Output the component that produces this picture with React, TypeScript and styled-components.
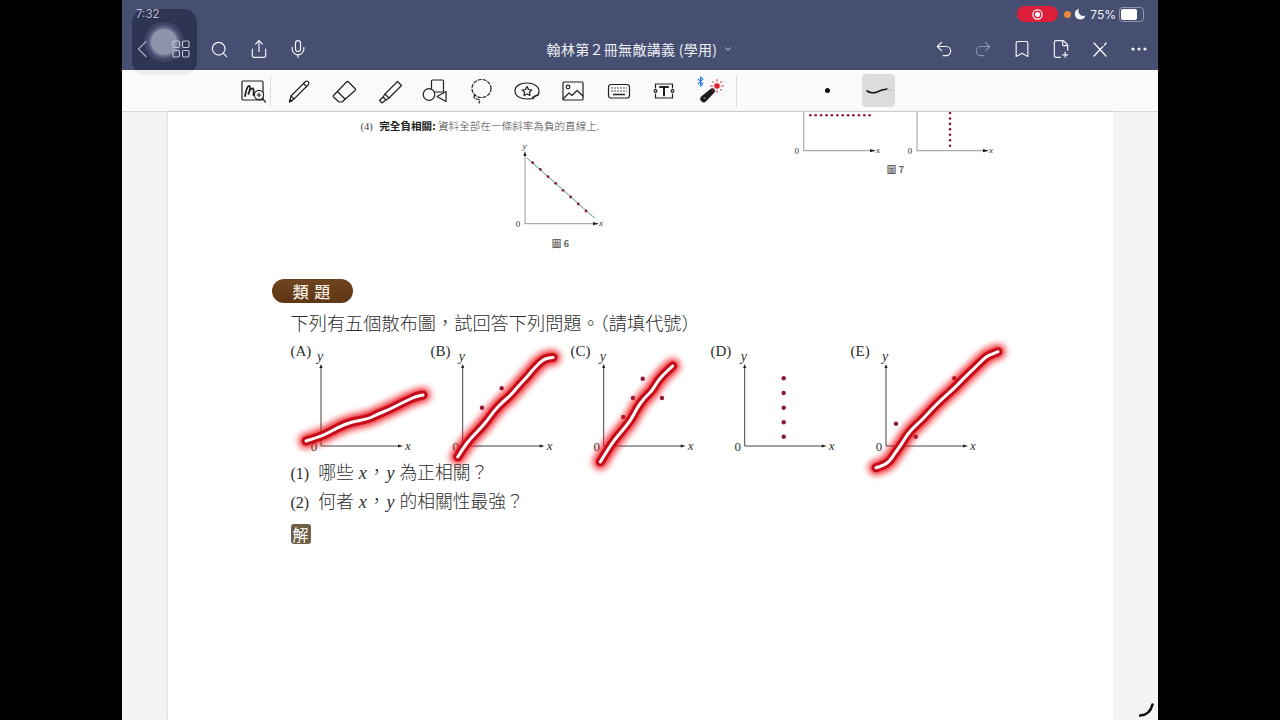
import styled, { createGlobalStyle } from 'styled-components'
import { Search, Share, Mic, Undo2, Redo2, Bookmark, FilePlus2, ChevronDown, Bluetooth } from 'lucide-react'

const serif = `'Liberation Serif', 'Noto Sans CJK TC', serif`
const sans = `'Noto Sans CJK TC', 'Noto Sans', sans-serif`

const GlobalStyle = createGlobalStyle`
  html, body { margin: 0; padding: 0; background: #000; }
  #root { width: 1280px; height: 720px; }
`

type Pt = number[]

// all chart points are in page coordinates, so they can be read straight off the scan
const charts: { label: string; x0: number; axis: number; dots: Pt[]; stroke?: Pt[] }[] = [
  {
    label: '(A)', x0: 290, axis: 320, dots: [],
    stroke: [[305, 441], [318, 437], [327, 433], [338, 427], [350, 422], [367, 419], [377, 414], [387, 410], [397, 405], [407, 400], [415, 396.5], [422, 395]],
  },
  {
    label: '(B)', x0: 430, axis: 461.7, dots: [[481, 407.7], [500.7, 388.3]],
    stroke: [[456.7, 457], [463, 447], [470, 438], [479, 429], [486.7, 420], [493, 411], [501.7, 402], [510, 395], [518.3, 385], [526, 377], [533.3, 368], [541.7, 360], [547, 358], [552, 357.5]],
  },
  {
    label: '(C)', x0: 570, axis: 602.7, dots: [[622.3, 417], [632, 398], [641.7, 378.7], [661, 398], [612.7, 436.7]],
    stroke: [[599.3, 462], [606, 451], [613.3, 440], [621, 431], [630, 420], [636, 408], [643.3, 398], [651, 391], [656.7, 381], [664, 373], [671.7, 366]],
  },
  {
    label: '(D)', x0: 710, axis: 743.7, dots: [[782.7, 378.3], [782.7, 393], [782.7, 407.7], [782.7, 422.3], [782.7, 436.7]],
  },
  {
    label: '(E)', x0: 850, axis: 885, dots: [[895, 423.7], [914.7, 436.7], [953.3, 378.3]],
    stroke: [[875, 467.7], [882, 465.5], [888.3, 461.7], [894, 453], [900, 445], [906, 435], [913.3, 426.7], [921, 420], [930, 410], [941, 399], [953.3, 388.3], [963, 378], [973.3, 368.3], [985, 356.7], [991, 354], [997, 351.7]],
  },
]

const comma = '\uFF0C'
const ask = '\uFF1F'

const toPath = (pts: Pt[]) => {
  let d = `M${pts[0][0]} ${pts[0][1]}`
  for (let i = 1; i < pts.length - 1; i++) {
    const mx = (pts[i][0] + pts[i + 1][0]) / 2
    const my = (pts[i][1] + pts[i + 1][1]) / 2
    d += ` Q${pts[i][0]} ${pts[i][1]} ${mx} ${my}`
  }
  const last = pts[pts.length - 1]
  return d + ` L${last[0]} ${last[1]}`
}

function Axes({ x, base, top, end, size = 13, small = false }: { x: number; base: number; top: number; end: number; size?: number; small?: boolean }) {
  const colour = small ? '#aaa' : '#444'
  const a = small ? 4 : 3
  return (
    <g>
      <path d={`M${x} ${top} V${base} H${end}`} fill="none" stroke={colour} strokeWidth={small ? 1.2 : 1} />
      {top > 120 && <path d={`M${x} ${top - a} l-1.6 ${a + 1} h3.2 z`} fill="#222" />}
      <path d={`M${end + a} ${base} l-${a + 2} -1.6 v3.2 z`} fill="#222" />
      <ChartText x={x - 7} y={base + size * 0.38} $size={size} textAnchor="middle">0</ChartText>
      <ChartText x={end + (small ? 4 : 5)} y={base + size * 0.3} $size={size} $italic>x</ChartText>
    </g>
  )
}

function ScatterChart({ x0, axis, dots, stroke }: { x0: number; axis: number; dots: Pt[]; stroke?: Pt[] }) {
  return (
    <ChartSvg viewBox={`${x0} 356 140 101`}>
      <Axes x={axis} base={446} top={367} end={axis + 79} />
      <ChartText x={axis - 4} y={361} $size={14} $italic>y</ChartText>
      {dots.map((d, i) => <circle key={i} cx={d[0]} cy={d[1]} r={2.2} fill="#8a1a3a" />)}
      {stroke && (
        <g fill="none" strokeLinecap="round" strokeLinejoin="round">
          <path d={toPath(stroke)} stroke="#f0141e" strokeWidth={15} opacity={0.9} filter="url(#glow)" />
          <path d={toPath(stroke)} stroke="#c40c1a" strokeWidth={9} />
          <path d={toPath(stroke)} stroke="#fff" strokeWidth={3} />
        </g>
      )}
    </ChartSvg>
  )
}

function Figure6() {
  const dots = [575, 598, 621, 644, 666, 689, 712, 735].map((zx, i) => [340 + zx / 3, 112 + [152, 172, 194, 214, 235, 255, 276, 297][i] / 3])
  return (
    <FigureSvg viewBox="510 138 100 94" $w={100} $h={94}>
      <Axes x={524} base={223.7} top={155} end={594} size={9} small />
      <ChartText x={521.5} y={149} $size={9} $italic>y</ChartText>
      <path d="M526 158 L593.5 218" stroke="#4f9a86" strokeWidth={1} />
      {dots.map((d, i) => <circle key={i} cx={d[0]} cy={d[1]} r={1.4} fill="#8a1a3a" />)}
    </FigureSvg>
  )
}

function Figure7() {
  const across = Array.from({ length: 12 }, (_, i) => 809.3 + i * 5.4)
  const down = Array.from({ length: 7 }, (_, i) => 114 + i * 5.45)
  return (
    <FigureSvg viewBox="790 113 210 47" $w={210} $h={47}>
      <Axes x={802.7} base={151.7} top={100} end={871} size={9} small />
      <Axes x={916} base={151.7} top={100} end={984} size={9} small />
      {across.map((x) => <circle key={x} cx={x} cy={116.3} r={1.3} fill="#8a1a3a" />)}
      {down.map((y) => <circle key={y} cx={949} cy={y} r={1.3} fill="#8a1a3a" />)}
    </FigureSvg>
  )
}

/* toolbar drawings */
const Ink = ({ children, w = 28 }: { children: React.ReactNode; w?: number }) => (
  <svg width={w} height={28} viewBox="0 0 28 28" fill="none" stroke="#222" strokeWidth={1.2} strokeLinecap="round" strokeLinejoin="round">
    {children}
  </svg>
)

const tools = [
  <Ink key="pen">
    <path d="M5.5 25 L7 19 L21.5 4.5 Q23 3.5 24.2 4.7 Q25.5 6 24.5 7.5 L10 22 Z" />
    <path d="M7 19 L10 22 M19.5 6.5 L22.5 9.5" />
    <path d="M5.5 25 L6.2 22.5 L8 24 Z" fill="#222" />
  </Ink>,
  <Ink key="eraser">
    <path d="M3.5 18.5 L16.5 5 Q17.5 4 18.5 5 L25 11.5 Q26 12.5 25 13.5 L12 25 H9 L3.5 20 Q3 19 3.5 18.5 Z" />
    <path d="M7.5 14.5 L15 22" />
  </Ink>,
  <Ink key="marker">
    <path d="M9 17 L21.5 4.5 L25.5 8.5 L13 21 Z" />
    <path d="M9 17 L7 20 L10 23 L13 21 M7 20 L3.5 23.5 L6 26 L10 23" />
  </Ink>,
  <Ink key="shapes">
    <rect x="10.5" y="3" width="12" height="12" rx="1" />
    <circle cx="8" cy="17.5" r="5.8" fill="#fafafa" />
    <path d="M25 14.5 V24.5 L16 19.5 Z" fill="#fafafa" />
  </Ink>,
  <Ink key="lasso">
    <ellipse cx="14.5" cy="11.5" rx="9.5" ry="9" strokeDasharray="3 2" />
    <path d="M7.5 18 Q6 22 10 22 Q14 22.5 12 26" strokeDasharray="3 2" />
  </Ink>,
  <Ink key="sticker">
    <path d="M14 6 C7 6 2 9 2 14 C2 19.5 8 22 14 22 Q17 22 19 21.5 Q20 19 23 18.5 Q26 18 26 15 C26.5 9 20 6 14 6 Z" />
    <path d="M20 22 Q21 19.5 25.5 18" />
    <path d="M14 9.5 L15.5 12.5 L18.8 13 L16.4 15.2 L17 18.5 L14 17 L11 18.5 L11.6 15.2 L9.2 13 L12.5 12.5 Z" />
  </Ink>,
  <Ink key="image">
    <rect x="4" y="5" width="20" height="18" rx="1" />
    <circle cx="9" cy="10" r="1.8" />
    <path d="M4 22 L10 16 L13 18.5 L18 13.5 L24 19" />
  </Ink>,
  <Ink key="keyboard">
    <rect x="3.5" y="7.5" width="21" height="13.5" rx="2.5" />
    <path d="M6.5 11h1M9.5 11h1M12.5 11h1M15.5 11h1M18.5 11h1M21 11h.5M6.5 14h1M9.5 14h1M12.5 14h1M15.5 14h1M18.5 14h1M21 14h.5M8 17.5h12" strokeWidth={1.6} strokeLinecap="butt" />
  </Ink>,
  <Ink key="text">
    <path d="M5.5 11 V7 H22.5 V11 M5.5 17 V21 H22.5 V17" />
    <circle cx="5.5" cy="14" r="1.4" />
    <circle cx="22.5" cy="14" r="1.4" />
    <path d="M10 10 H18 M14 10 V18.5" strokeWidth={2} />
  </Ink>,
  <Ink key="laser">
    <path d="M6.5 24.5 Q3.5 22.5 5.5 20 L15.5 12 Q17 11.5 18 12.5 Q19 14 18 15 L9.5 24 Q8 25.5 6.5 24.5 Z" fill="#1c1c1c" />
    <circle cx="8.5" cy="21" r="1" fill="#777" stroke="none" />
    <circle cx="21" cy="9" r="2.8" fill="#e0222e" stroke="none" />
    <path d="M21 2.5v2M21 13.5v2M14.5 9h2M25.5 9h2M16.5 4.5l1.4 1.4M24.2 12.2l1.4 1.4M16.5 13.5l1.4-1.4M24.2 5.8l1.4-1.4" stroke="#e0222e" strokeWidth={0.9} />
  </Ink>,
]

export default function App() {
  return (
    <>
      <GlobalStyle />
      <Stage>
        <Tablet>
          <Header>
            <FloatingTouch>
              <TouchRing />
            </FloatingTouch>
            <StatusBar>
              <Clock>7:32</Clock>
              <StatusRight>
                <RecordPill>
                  <RecordDot />
                </RecordPill>
                <OrangeDot />
                <svg width="12" height="12" viewBox="0 0 12 12"><path d="M5 .8 A5.4 5.4 0 1 0 11.4 7.6 A5 5 0 0 1 5 .8 Z" fill="#f2f2f6" /></svg>
                <Percent>75%</Percent>
                <Battery>
                  <BatteryFill />
                </Battery>
              </StatusRight>
            </StatusBar>
            <NavBar>
              <NavGroup>
                <NavSlot>
                  <svg width="12" height="18" viewBox="0 0 12 18" fill="none" stroke="#a3a7bb" strokeWidth="1.3" strokeLinecap="round" strokeLinejoin="round"><path d="M10 1.5 L2.5 9 L10 16.5" /></svg>
                </NavSlot>
                <NavSlot>
                  <svg width="18" height="18" viewBox="0 0 18 18" fill="none" stroke="#c6c8d6" strokeWidth="1.1"><rect x="1" y="1" width="6.5" height="6.5" rx="1.2" /><rect x="10.5" y="1" width="6.5" height="6.5" rx="1.2" /><rect x="1" y="10.5" width="6.5" height="6.5" rx="1.2" /><rect x="10.5" y="10.5" width="6.5" height="6.5" rx="1.2" /></svg>
                </NavSlot>
                <NavSlot><Search size={19} strokeWidth={1.5} /></NavSlot>
                <NavSlot><Share size={20} strokeWidth={1.4} /></NavSlot>
                <NavSlot><Mic size={20} strokeWidth={1.4} /></NavSlot>
              </NavGroup>
              <DocTitle>
                {'翰林第\uFF12冊無敵講義 (學用)'}
                <ChevronDown size={10} strokeWidth={2} />
              </DocTitle>
              <NavGroup>
                <NavSlot><Undo2 size={20} strokeWidth={1.4} /></NavSlot>
                <NavSlot $dim><Redo2 size={20} strokeWidth={1.4} /></NavSlot>
                <NavSlot><Bookmark size={20} strokeWidth={1.4} /></NavSlot>
                <NavSlot><FilePlus2 size={20} strokeWidth={1.4} /></NavSlot>
                <NavSlot>
                  <svg width="18" height="18" viewBox="0 0 18 18" fill="none" stroke="#f2f2f6" strokeWidth="1.4" strokeLinecap="round"><path d="M3 3 L15 16 M3 16 L12 6.5 M13.5 5 L15 3" /></svg>
                </NavSlot>
                <NavSlot>
                  <svg width="18" height="6" viewBox="0 0 18 6" fill="#f2f2f6"><circle cx="3" cy="3" r="1.6" /><circle cx="9" cy="3" r="1.6" /><circle cx="15" cy="3" r="1.6" /></svg>
                </NavSlot>
              </NavGroup>
            </NavBar>
          </Header>

          <Toolbar>
            <ToolSlot>
              <Ink>
                <rect x="3" y="4" width="21" height="19" rx="1" />
                <path d="M6 19 Q8 8 10.5 9 Q12 10 9.5 17 Q11 11 14 11.5 Q15 13 14.5 18" strokeWidth={1.8} />
                <circle cx="20" cy="18" r="4.6" fill="#fafafa" />
                <path d="M23.5 21.5 L26.5 25 M18.2 18h3.6M20 16.2v3.6" />
              </Ink>
            </ToolSlot>
            <ToolDivider />
            <ToolGroup>
              {tools.map((tool) => <ToolSlot key={tool.key}>{tool}</ToolSlot>)}
              <BluetoothMark><Bluetooth size={11} strokeWidth={2.4} /></BluetoothMark>
            </ToolGroup>
            <ToolDivider $wide />
            <PenDot />
            <PenPreview>
              <svg width="28" height="10" viewBox="0 0 28 10" fill="none"><path d="M2 5 Q7 8 12 6 Q17 3.5 22 3" stroke="#111" strokeWidth="1.5" strokeLinecap="round" /><path d="M22 3 Q25 3 27 5" stroke="#aaa" strokeWidth="0.8" /></svg>
            </PenPreview>
          </Toolbar>

          <Viewer>
            <Gutter />
            <Sheet>
              <TopFigures>
                <TopLeft>
                  <SmallLine>
                    <Num>(4)</Num> <b>完全負相關:</b> 資料全部在一條斜率為負的直線上.
                  </SmallLine>
                  <FigureBlock $left={150} $gap={5}>
                    <Figure6 />
                    <Caption>圖 6</Caption>
                  </FigureBlock>
                </TopLeft>
                <FigureBlock $left={0} $gap={4}>
                  <Figure7 />
                  <Caption>圖 7</Caption>
                </FigureBlock>
              </TopFigures>

              <ExerciseTag>類 題</ExerciseTag>
              <Exercise>
                <Question>{'下列有五個散布圖\uFF0C試回答下列問題\u3002\uFF08請填代號\uFF09'}</Question>
                <ChartRow>
                  {charts.map((c) => (
                    <ChartCell key={c.label}>
                      <ChartLabel>{c.label}</ChartLabel>
                      <ScatterChart x0={c.x0} axis={c.axis} dots={c.dots} stroke={c.stroke} />
                    </ChartCell>
                  ))}
                </ChartRow>
                <SubQuestion><Num>(1)</Num>哪些 <i>x</i>{comma}<i>y</i> 為正相關{ask}</SubQuestion>
                <SubQuestion><Num>(2)</Num>何者 <i>x</i>{comma}<i>y</i> 的相關性最強{ask}</SubQuestion>
                <AnswerBadge>解</AnswerBadge>
              </Exercise>
            </Sheet>
            <Gutter>
              <CornerMark width="16" height="14" viewBox="0 0 16 14" fill="none"><path d="M1 12.5 Q11 12 13.5 1.5" stroke="#111" strokeWidth="2.6" strokeLinecap="round" /></CornerMark>
            </Gutter>
          </Viewer>
        </Tablet>
      </Stage>
      <svg width="0" height="0" style={{ position: 'absolute' }}>
        <defs>
          <filter id="glow" x="-30%" y="-30%" width="160%" height="160%">
            <feGaussianBlur stdDeviation="3" />
          </filter>
        </defs>
      </svg>
    </>
  )
}

const Stage = styled.div`
  width: 1280px;
  height: 720px;
  display: flex;
  justify-content: center;
  background: #000;
  overflow: hidden;
`

const Tablet = styled.div`
  width: 1036px;
  height: 720px;
  display: flex;
  flex-direction: column;
  background: #f3f3f3;
`

const Header = styled.header`
  position: relative;
  height: 70px;
  flex: none;
  z-index: 1;
  background: #464f72;
  color: #f2f2f6;
  font-family: ${sans};
`

const StatusBar = styled.div`
  position: relative;
  height: 28px;
  display: flex;
  justify-content: space-between;
  align-items: center;
  padding: 0 14px;
`

const Clock = styled.span`
  font: 11.5px 'Inter', sans-serif;
  color: #b4b8c9;
`

const StatusRight = styled.div`
  display: flex;
  align-items: center;
  gap: 3px;
`

const RecordPill = styled.div`
  width: 41px;
  height: 16px;
  border-radius: 8px;
  background: #dd1f3c;
  display: flex;
  align-items: center;
  justify-content: center;
  margin-right: 3px;
`

const RecordDot = styled.span`
  width: 5px;
  height: 5px;
  border-radius: 50%;
  background: #fff;
  box-shadow: 0 0 0 1.5px #dd1f3c, 0 0 0 2.7px #fff;
`

const OrangeDot = styled.span`
  width: 7px;
  height: 7px;
  border-radius: 50%;
  background: #e98a3c;
`

const Percent = styled.span`
  font: 12px 'Inter', sans-serif;
  color: #eef0f5;
  margin-left: 1px;
`

const Battery = styled.div`
  width: 21px;
  height: 11px;
  border: 1px solid #9097ad;
  border-radius: 3.5px;
  padding: 1px;
  box-sizing: content-box;
`

const BatteryFill = styled.div`
  width: 75%;
  height: 100%;
  background: #fff;
  border-radius: 2px;
`

const NavBar = styled.div`
  position: relative;
  height: 42px;
  display: grid;
  grid-template-columns: 1fr auto 1fr;
  align-items: center;
`

const NavGroup = styled.div`
  display: flex;
  align-items: center;
  &:last-child { justify-content: flex-end; }
`

const NavSlot = styled.div<{ $dim?: boolean }>`
  width: 39px;
  height: 39px;
  display: flex;
  align-items: center;
  justify-content: center;
  color: ${(p) => (p.$dim ? '#8d93ab' : '#f2f2f6')};
`

const DocTitle = styled.div`
  display: flex;
  align-items: center;
  gap: 4px;
  font-size: 14px;
  letter-spacing: 0.3px;
  color: #eef0f5;
  & > svg { margin-left: 2px; }
`

const FloatingTouch = styled.div`
  position: absolute;
  left: 10px;
  top: 9px;
  width: 65px;
  height: 66px;
  border-radius: 14px;
  background: linear-gradient(rgba(30, 36, 66, 0.62) 0 92%, rgba(0, 0, 0, 0.05) 92%);
  display: flex;
  align-items: center;
  justify-content: center;
`

const TouchRing = styled.div`
  width: 26px;
  height: 26px;
  border-radius: 50%;
  margin: -1px 0 0 -1px;
  background: #8f94ad;
  box-shadow: 0 0 0 2px #6a7090, 0 0 0 4px #4d5476, 0 0 0 7px #3e4566;
`

const Toolbar = styled.div`
  height: 42px;
  flex: none;
  box-sizing: border-box;
  border-bottom: 1px solid #d9d9d9;
  background: #fafafa;
  display: flex;
  align-items: center;
  padding-left: 117px;
`

const ToolSlot = styled.div`
  width: 28px;
  height: 28px;
  flex: none;
`

const ToolGroup = styled.div`
  position: relative;
  display: flex;
  gap: 17.8px;
  margin-left: 13px;
`

const BluetoothMark = styled.span`
  position: absolute;
  right: 18px;
  top: -4px;
  color: #2a7de1;
`

const ToolDivider = styled.div<{ $wide?: boolean }>`
  width: 1px;
  height: 32px;
  background: #dedede;
  margin-left: ${(p) => (p.$wide ? '12px' : '3px')};
`

const PenDot = styled.span`
  width: 5px;
  height: 5px;
  border-radius: 50%;
  background: #111;
  margin-left: 88px;
`

const PenPreview = styled.div`
  width: 33px;
  height: 33px;
  border-radius: 4px;
  background: #dcdcdc;
  margin-left: 32px;
  display: flex;
  align-items: center;
  justify-content: center;
`

const Viewer = styled.div`
  flex: 1;
  display: flex;
  min-height: 0;
`

const Gutter = styled.div`
  flex: 1;
  display: flex;
  justify-content: flex-end;
  align-items: flex-end;
  background: #f3f3f3;
`

const CornerMark = styled.svg`
  margin: 0 3px 3px 0;
`

const Sheet = styled.main`
  width: 945px;
  flex: none;
  overflow: hidden;
  box-sizing: border-box;
  background: #fff;
  box-shadow: 0 0 3px rgba(0, 0, 0, 0.16);
  padding-left: 104px;
  font-family: ${serif};
  color: #2c2c2c;
`

const TopFigures = styled.section`
  height: 167px;
  display: flex;
`

const TopLeft = styled.div`
  box-sizing: border-box;
  width: 519px;
  padding-left: 89px;
`

const SmallLine = styled.div`
  font-family: ${sans};
  font-weight: 300;
  font-size: 10.6px;
  line-height: 14px;
  margin-top: 7px;
  height: 19px;
  color: #444;
  white-space: nowrap;
  & b { font-weight: 700; color: #222; }
`

const Num = styled.span`
  font-family: ${serif};
  margin-right: 4px;
`

const FigureBlock = styled.div<{ $left: number; $gap: number }>`
  width: fit-content;
  margin-left: ${(p) => p.$left}px;
  display: flex;
  flex-direction: column;
  align-items: center;
  gap: ${(p) => p.$gap}px;
`

const FigureSvg = styled.svg<{ $w: number; $h: number }>`
  display: block;
  width: ${(p) => p.$w}px;
  height: ${(p) => p.$h}px;
`

const Caption = styled.div`
  font-family: ${sans};
  font-size: 9.5px;
  font-weight: 700;
  line-height: 12px;
  color: #666;
  white-space: nowrap;
`

const ExerciseTag = styled.div`
  box-sizing: border-box;
  width: 81px;
  height: 24px;
  border-radius: 12px;
  background: linear-gradient(#6f4421, #5f3716);
  color: #f6efe4;
  font-family: ${sans};
  font-size: 16px;
  font-weight: 500;
  line-height: 24px;
  text-align: center;
  letter-spacing: 1px;
  margin-bottom: 6px;
`

const Exercise = styled.section`
  padding-left: 19px;
`

const Question = styled.div`
  font-family: ${sans};
  font-size: 18.2px;
  font-weight: 300;
  line-height: 26px;
  white-space: nowrap;
`

const ChartRow = styled.div`
  display: grid;
  grid-template-columns: repeat(5, 140px);
  padding-top: 9px;
`

const ChartCell = styled.div`
  display: flex;
  flex-direction: column;
`

const ChartLabel = styled.div`
  font-family: ${serif};
  font-size: 15px;
  line-height: 15px;
  height: 12px;
  color: #2c2c2c;
`

const ChartSvg = styled.svg`
  display: block;
  width: 140px;
  height: 101px;
  overflow: visible;
`

const ChartText = styled.text<{ $size: number; $italic?: boolean }>`
  font-family: ${serif};
  font-size: ${(p) => p.$size}px;
  font-style: ${(p) => (p.$italic ? 'italic' : 'normal')};
  fill: #333;
`

const SubQuestion = styled.div`
  font-family: ${sans};
  font-size: 17.8px;
  font-weight: 300;
  line-height: 29px;
  height: 29px;
  white-space: nowrap;
  & i { font-family: ${serif}; font-size: 18px; margin: 0 1px; line-height: 0; }
  & ${Num} { margin-right: 9px; font-size: 16px; line-height: 0; }
`

const AnswerBadge = styled.div`
  width: 20px;
  height: 20px;
  margin-top: 9px;
  border-radius: 3px;
  background: #6f6048;
  color: #fff;
  font-family: ${sans};
  font-size: 16px;
  line-height: 20px;
  text-align: center;
`
